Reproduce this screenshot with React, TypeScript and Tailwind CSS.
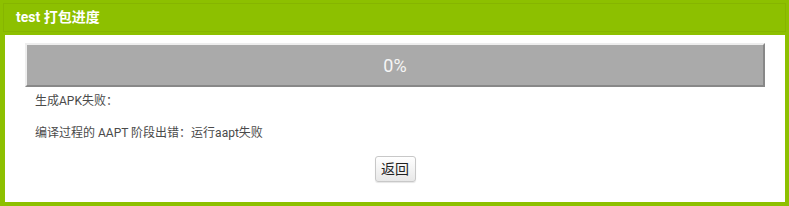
export default function App() {
  const percent = 0;

  return (
    <div
      className="w-[789px] h-[206px] bg-[#8dc000] pl-[5px] pr-[4px] pb-[4px] flex flex-col"
      style={{ fontFamily: 'Roboto, "Noto Sans CJK SC", sans-serif' }}
    >
      {/* Titre */}
      <div className="h-[35px] -ml-[5px] -mr-[4px] px-[3px] pt-[3px] pb-[3px]">
        <div className="h-full border border-[#86b500] flex items-center pl-[12px]">
          <span className="text-[14px] font-bold text-white">test 打包进度</span>
        </div>
      </div>

      <div className="flex-1 bg-white pt-[8px] px-[20px]">
        {/* Barre de progression */}
        <div className="h-[44px] bg-[#aaaaaa] border-2 border-t-[#eeeeee] border-l-[#eeeeee] border-r-[#888888] border-b-[#888888] flex items-center justify-center">
          <span className="text-[18px] text-[#f6f6f6]">{percent}%</span>
        </div>

        <div className="px-[10px] text-[12px] text-[#4a4a4a]">
          <p className="mt-[7px] leading-[14px]">生成APK失败：</p>
          <p className="mt-[18px] leading-[14px]">编译过程的 AAPT 阶段出错：运行aapt失败</p>
        </div>

        <div className="flex justify-center mt-[16px]">
          <button className="h-[26px] w-[41px] text-[14px] text-[#222222] bg-gradient-to-b from-white to-[#e8e8e8] border border-[#c8c8c8] rounded-[3px] shadow-[0_1px_1px_rgba(0,0,0,0.1)]">
            返回
          </button>
        </div>
      </div>
    </div>
  );
}
